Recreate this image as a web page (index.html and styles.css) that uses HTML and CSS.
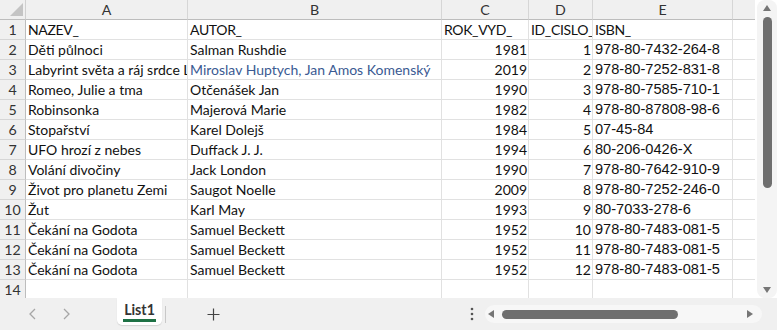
FILE: index.html
```html
<!DOCTYPE html>
<html>
<head>
<meta charset="utf-8">
<link rel="stylesheet" href="styles.css">
</head>
<body>
<div class="app">
  <div class="main">
    <div class="sheet">
      <div class="grid">
        <div class="corner"><svg width="25" height="19" viewBox="0 0 25 19"><polygon points="10,16 23,16 23,3" fill="#c4c4c4"/></svg></div>
        <div class="ch">A</div><div class="ch">B</div><div class="ch">C</div><div class="ch">D</div><div class="ch">E</div><div class="ch"></div>

        <div class="rh">1</div><div class="c hdr">NAZEV_</div><div class="c hdr">AUTOR_</div><div class="c hdr">ROK_VYD_</div><div class="c hdr">ID_CISLO_</div><div class="c hdr">ISBN_</div><div class="c"></div>
        <div class="rh">2</div><div class="c">Děti půlnoci</div><div class="c">Salman Rushdie</div><div class="c n">1981</div><div class="c n">1</div><div class="c isbn">978-80-7432-264-8</div><div class="c"></div>
        <div class="rh">3</div><div class="c">Labyrint světa a ráj srdce L</div><div class="c blue">Miroslav Huptych, Jan Amos Komenský</div><div class="c n">2019</div><div class="c n">2</div><div class="c isbn">978-80-7252-831-8</div><div class="c"></div>
        <div class="rh">4</div><div class="c">Romeo, Julie a tma</div><div class="c">Otčenášek Jan</div><div class="c n">1990</div><div class="c n">3</div><div class="c isbn">978-80-7585-710-1</div><div class="c"></div>
        <div class="rh">5</div><div class="c">Robinsonka</div><div class="c">Majerová Marie</div><div class="c n">1982</div><div class="c n">4</div><div class="c isbn">978-80-87808-98-6</div><div class="c"></div>
        <div class="rh">6</div><div class="c">Stopařství</div><div class="c">Karel Dolejš</div><div class="c n">1984</div><div class="c n">5</div><div class="c isbn">07-45-84</div><div class="c"></div>
        <div class="rh">7</div><div class="c">UFO hrozí z nebes</div><div class="c">Duffack J. J.</div><div class="c n">1994</div><div class="c n">6</div><div class="c isbn">80-206-0426-X</div><div class="c"></div>
        <div class="rh">8</div><div class="c">Volání divočiny</div><div class="c">Jack London</div><div class="c n">1990</div><div class="c n">7</div><div class="c isbn">978-80-7642-910-9</div><div class="c"></div>
        <div class="rh">9</div><div class="c">Život pro planetu Zemi</div><div class="c">Saugot Noelle</div><div class="c n">2009</div><div class="c n">8</div><div class="c isbn">978-80-7252-246-0</div><div class="c"></div>
        <div class="rh">10</div><div class="c">Žut</div><div class="c">Karl May</div><div class="c n">1993</div><div class="c n">9</div><div class="c isbn">80-7033-278-6</div><div class="c"></div>
        <div class="rh">11</div><div class="c">Čekání na Godota</div><div class="c">Samuel Beckett</div><div class="c n">1952</div><div class="c n">10</div><div class="c isbn">978-80-7483-081-5</div><div class="c"></div>
        <div class="rh">12</div><div class="c">Čekání na Godota</div><div class="c">Samuel Beckett</div><div class="c n">1952</div><div class="c n">11</div><div class="c isbn">978-80-7483-081-5</div><div class="c"></div>
        <div class="rh">13</div><div class="c">Čekání na Godota</div><div class="c">Samuel Beckett</div><div class="c n">1952</div><div class="c n">12</div><div class="c isbn">978-80-7483-081-5</div><div class="c"></div>
        <div class="rh">14</div><div class="c"></div><div class="c"></div><div class="c"></div><div class="c"></div><div class="c"></div><div class="c"></div>
      </div>
    </div>
    <div class="vscroll">
      <svg class="varrow" width="10" height="8" viewBox="0 0 10 8"><polygon points="1,7 9,7 5,1" fill="#767676"/></svg>
      <div class="vthumb"></div>
      <div class="vfill"></div>
      <svg class="varrow" width="10" height="8" viewBox="0 0 10 8"><polygon points="1,1 9,1 5,7" fill="#767676"/></svg>
    </div>
  </div>
  <div class="tabbar">
    <div class="nav"><svg width="10" height="14" viewBox="0 0 10 14"><polyline points="7,2 2,7 7,12" fill="none" stroke="#a6a6a6" stroke-width="1.3"/></svg></div>
    <div class="nav"><svg width="10" height="14" viewBox="0 0 10 14"><polyline points="3,2 8,7 3,12" fill="none" stroke="#a6a6a6" stroke-width="1.3"/></svg></div>
    <div class="tab"><span class="tabname">List1</span></div>
    <div class="sep"></div>
    <div class="add"><svg width="13" height="13" viewBox="0 0 13 13"><path d="M6.5 0.5V12.5M0.5 6.5H12.5" stroke="#444" stroke-width="1.2"/></svg></div>
    <div class="spacer"></div>
    <div class="dots"><svg width="4" height="14" viewBox="0 0 4 14"><circle cx="2" cy="2" r="1.3" fill="#555"/><circle cx="2" cy="7" r="1.3" fill="#555"/><circle cx="2" cy="12" r="1.3" fill="#555"/></svg></div>
    <div class="hscroll">
      <svg width="8" height="10" viewBox="0 0 8 10"><polygon points="7,1 7,9 1,5" fill="#767676"/></svg>
      <div class="hthumb"></div>
      <div class="hfill"></div>
      <svg width="8" height="10" viewBox="0 0 8 10"><polygon points="1,1 1,9 7,5" fill="#767676"/></svg>
    </div>
  </div>
</div>
</body>
</html>
```
FILE: styles.css
```css
* { box-sizing: border-box; }
html, body { margin: 0; padding: 0; }
body {
  width: 777px;
  height: 330px;
  overflow: hidden;
  background: #f0f0f0;
  font-family: Lato, "Open Sans", sans-serif;
}
.app { display: flex; flex-direction: column; width: 777px; height: 330px; }
.main { display: flex; height: 298px; background: #fff; }
.sheet { width: 755px; height: 298px; overflow: hidden; }
.grid {
  display: grid;
  grid-template-columns: 26px 162px 254px 87px 64px 140px 23px;
  grid-auto-rows: 20px;
}
.corner {
  background: #f0f0f0;
  border-right: 1px solid #d0d0d0;
  border-bottom: 1px solid #bdbdbd;
}
.corner svg { display: block; }
.ch {
  background: #f0f0f0;
  border-right: 1px solid #d6d6d6;
  border-bottom: 1px solid #bdbdbd;
  color: #333;
  font-size: 14.2px;
  line-height: 19px;
  text-align: center;
}
.rh {
  background: #f0f0f0;
  border-right: 1px solid #bdbdbd;
  border-bottom: 1px solid #d6d6d6;
  color: #333;
  font-size: 14.2px;
  line-height: 19px;
  text-align: center;
}
.c {
  border-right: 1px solid #e1e1e1;
  border-bottom: 1px solid #e1e1e1;
  font-size: 14px;
  line-height: 19px;
  padding: 0 1px 0 2px;
  color: #111;
  white-space: nowrap;
  overflow: hidden;
}
.hdr { letter-spacing: -0.35px; padding-left: 2px; padding-right: 0; }
.n { text-align: right; padding-right: 1px; }
.isbn { font-family: "Liberation Sans", Arial, sans-serif; font-size: 14.6px; }
.blue { color: #3a5a92; }

.vscroll {
  width: 22px;
  height: 298px;
  background: #fff;
  display: flex;
  flex-direction: column;
  align-items: center;
  padding: 4px 0 4px 2px;
  position: relative;
}
.vscroll::before {
  content: "";
  position: absolute;
  left: 2px; right: 0; top: 0; bottom: 0;
  background: #f4f4f4;
  border-radius: 8px;
}
.varrow { position: relative; display: block; flex: none; }
.vthumb {
  position: relative;
  width: 9px;
  height: 171px;
  margin-top: 5px;
  background: #6f6f6f;
  border-radius: 5px;
  flex: none;
}
.vfill { flex: 1; }

.tabbar {
  display: flex;
  align-items: center;
  height: 32px;
  padding-left: 16px;
}
.nav { width: 33px; display: flex; justify-content: center; align-items: center; height: 32px; }
.nav svg { display: block; }
.tab {
  margin-left: 35px;
  align-self: flex-start;
  width: 45px;
  height: 27px;
  background: #fff;
  border-radius: 0 0 5px 5px;
  box-shadow: 0 1px 1px rgba(0,0,0,0.12);
  display: flex;
  justify-content: center;
  padding-top: 2px;
}
.tabname {
  font-size: 14.2px;
  font-weight: 700;
  color: #333;
  line-height: 19px;
  height: 22px;
  border-bottom: 3px solid #1e7145;
  padding: 0 1px;
}
.sep { width: 1px; height: 17px; background: #c8c8c8; margin-left: 3px; }
.add { width: 42px; margin-left: 26px; display: flex; justify-content: center; }
.add svg { display: block; }
.spacer { flex: 1; }
.dots { width: 8px; display: flex; justify-content: center; margin-right: 9px; }
.dots svg { display: block; }
.hscroll {
  width: 277px;
  height: 18px;
  margin-right: 15px;
  background: #f7f7f7;
  border-radius: 9px;
  display: flex;
  align-items: center;
  padding: 0 8px 0 2px;
}
.hscroll svg { display: block; flex: none; }
.hthumb {
  width: 176px;
  height: 9px;
  margin-left: 7px;
  background: #6f6f6f;
  border-radius: 5px;
  flex: none;
}
.hfill { flex: 1; }
```
